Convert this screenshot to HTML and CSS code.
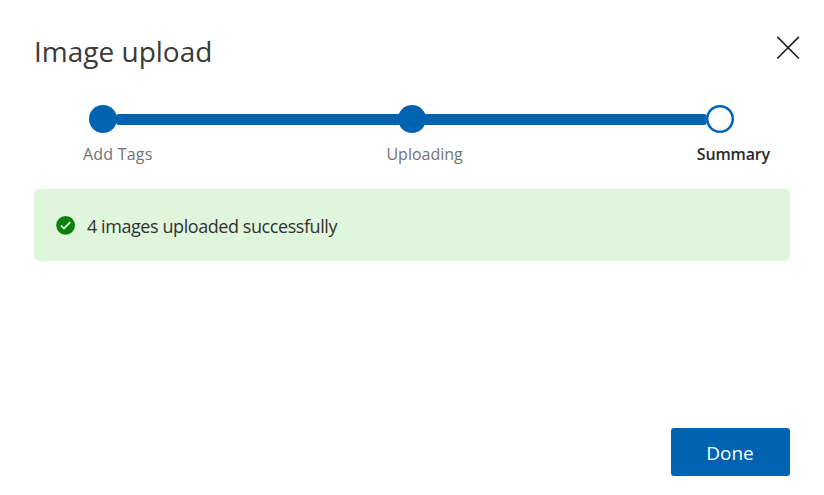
FILE: index.html
```html
<!DOCTYPE html>
<html lang="en">
<head>
<meta charset="utf-8">
<title>Image upload</title>
<link rel="stylesheet" href="styles.css">
</head>
<body>
<main class="dialog">
  <header class="header">
    <h1 class="title">Image upload</h1>
    <button class="close" aria-label="Close">
      <svg width="24" height="24" viewBox="0 0 24 24"><path d="M1.3.9 22.9 22.5M22.9.9 1.3 22.5" fill="none" stroke="#222" stroke-width="1.7"/></svg>
    </button>
  </header>
  <div class="track">
    <span class="dot"></span><span class="line first"></span><span class="dot"></span><span class="line last"></span><span class="dot current"></span>
  </div>
  <div class="labels">
    <span class="label tags">Add Tags</span>
    <span class="label">Uploading</span>
    <span class="label active">Summary</span>
  </div>
  <section class="message">
    <svg width="20" height="20" viewBox="0 0 20 20"><circle cx="9.6" cy="10.3" r="9.4" fill="#0b800b"/><path d="M5 10.6 8 13.4 14.2 7.2" fill="none" stroke="#dff6dd" stroke-width="1.8"/></svg>
    <span class="text">4 images uploaded successfully</span>
  </section>
  <footer class="footer"><button class="done">Done</button></footer>
</main>
</body>
</html>
```
FILE: styles.css
```css
* { box-sizing: border-box; }
body { margin: 0; background: #fff; color: #323130; font-family: "Open Sans", "Noto Sans", sans-serif; }
button { font: inherit; border: 0; padding: 0; }
.dialog { height: 495px; padding: 33px 34.5px 19px 34px; display: flex; flex-direction: column; }
.header { display: flex; justify-content: space-between; height: 72px; margin-right: -10.5px; }
.title { margin: 0; font-size: 28px; line-height: 36px; font-weight: 400; color: #3b3a39; }
.close { width: 24px; height: 24px; margin-top: 3px; background: none; }
.close svg { display: block; }
.track { display: flex; align-items: center; height: 29px; margin: 0 55.7px 0 55.3px; }
.dot { width: 28px; height: 28px; margin-bottom: 1px; border-radius: 50%; background: #0063b1; flex: none; }
.current { background: #fff; box-shadow: inset 0 0 0 2.5px #0063b1; }
.line { flex: 1; height: 11px; background: #0063b1; }
.first { margin: 0 -2px 0 -1px; border-radius: 3px 0 0 3px; }
.last { margin: 0 -1px 0 -2px; border-radius: 0 3px 3px 0; }
.labels { display: flex; justify-content: space-between; margin: 8px 19.5px 0 49px; height: 47px; font-size: 16px; line-height: 24px; color: #737373; }
.tags { letter-spacing: 0.2px; }
.label.active { color: #292827; font-weight: 600; letter-spacing: -0.15px; }
.message { display: flex; align-items: center; height: 72px; padding-left: 22px; gap: 11px; border-radius: 5px; background: #dff6dd; font-size: 18px; }
.text { letter-spacing: -0.43px; padding-top: 2px; }
.footer { margin-top: auto; display: flex; justify-content: flex-end; }
.done { width: 119px; height: 48px; padding-top: 2px; border-radius: 3px; background: #0063b1; color: #fff; font-size: 19px; }
```
